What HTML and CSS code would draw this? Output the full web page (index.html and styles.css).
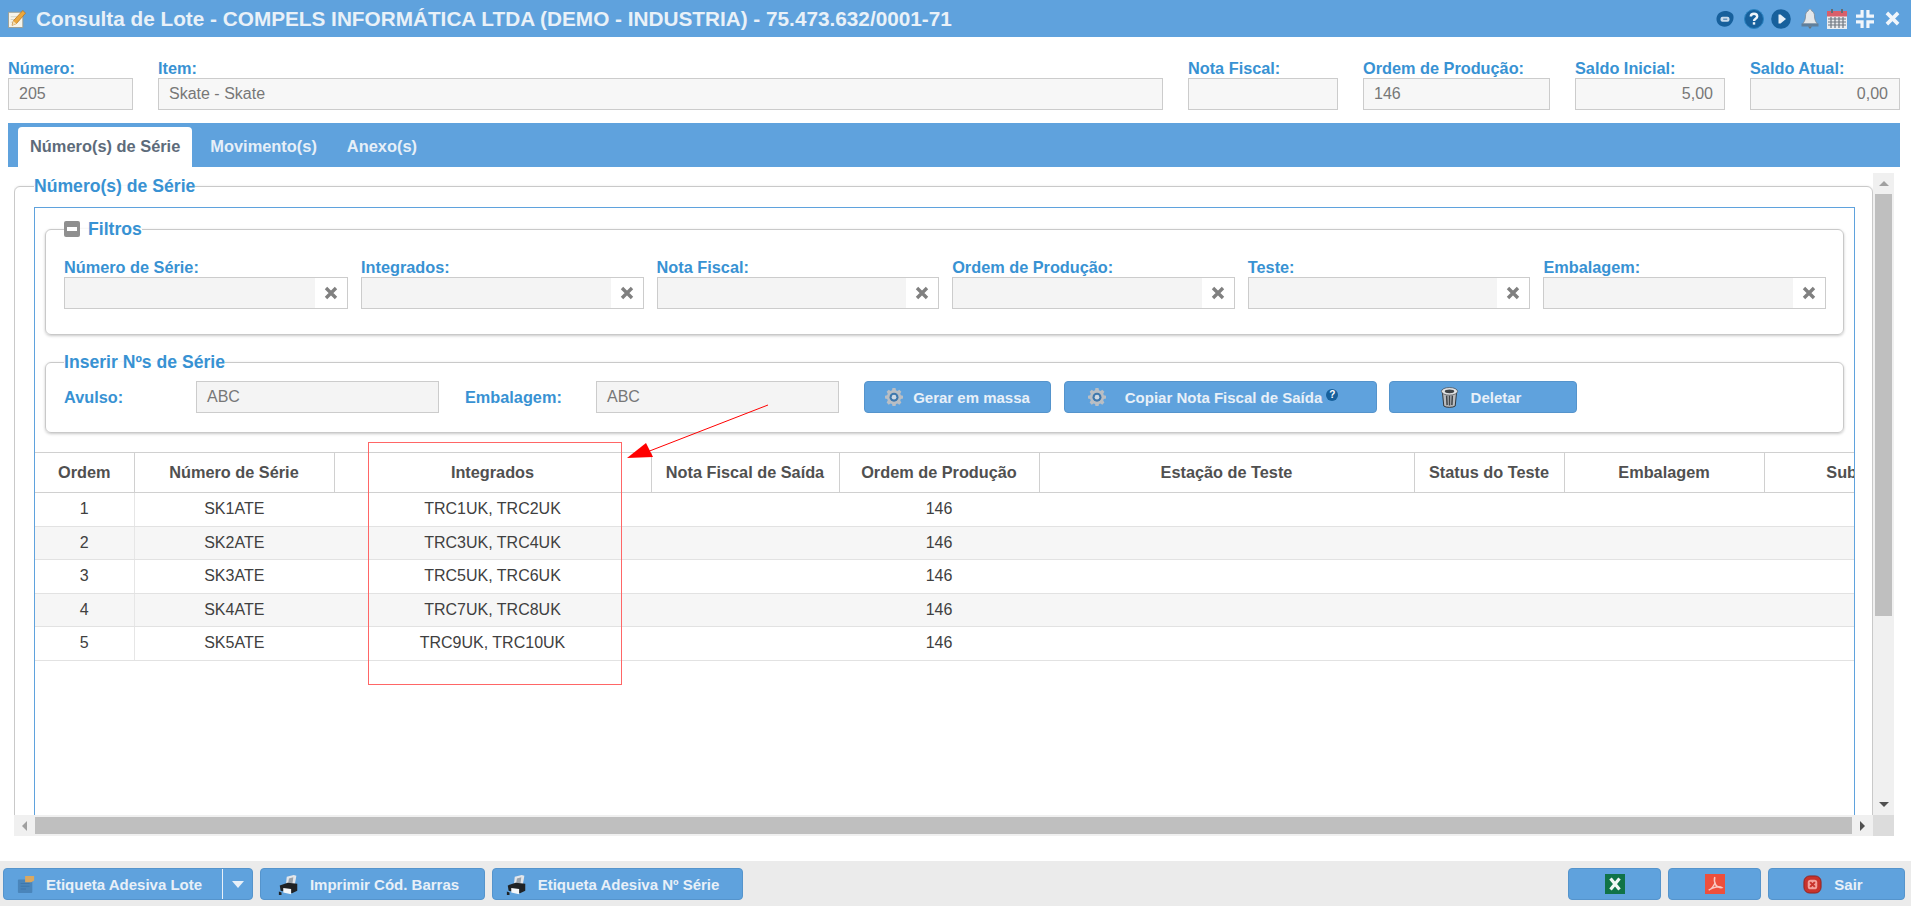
FILE: index.html
```html
<!DOCTYPE html>
<html lang="pt-BR">
<head>
<meta charset="utf-8">
<title>Consulta de Lote</title>
<link rel="stylesheet" href="styles.css">
</head>
<body>
<svg class="defs" width="0" height="0" aria-hidden="true">
  <defs>
    <symbol id="gear" viewBox="0 0 20 20">
      <path fill="#b9bec4" d="M8.300 0h3.400l.5 2.600 1.600.7 2.100-1.400 2.300 2.400-1.300 2.100.7 1.700 2.400.5v3.200l-2.400.5-.7 1.700 1.300 2.100-2.300 2.400-2.100-1.400-1.600.7-.5 2.100H8.300l-.5-2.100-1.600-.7-2.100 1.400-2.300-2.400 1.300-2.100-.7-1.700L0 11.800V8.600l2.400-.5.7-1.700-1.300-2.100 2.300-2.400 2.100 1.400 1.600-.7z"/>
      <circle cx="10" cy="10.200" r="5" fill="#3f78ad"/>
      <circle cx="10" cy="10.200" r="2.600" fill="#cfd9e4"/>
    </symbol>
    <symbol id="printer" viewBox="0 0 24 24">
      <path fill="#e3e6ea" d="M10 3l8-2 3 1-2 11H9z"/>
      <path fill="#9aa2aa" d="M12.500 5l5-1.200-1 7-5 .3z"/>
      <path fill="#1f2225" d="M2 13l9-3 11 1v8l-6 3-13-3z"/>
      <path fill="#f4f6f8" d="M6 16l9 1.200V23l-9-2z"/>
      <path fill="#1f2225" d="M1 20l3 1v3H1z"/>
    </symbol>
  </defs>
</svg>

<header class="titlebar">
  <div class="title">
    <svg class="title-icon" viewBox="0 0 20 20" aria-hidden="true">
      <path fill="#f6f4ea" stroke="#9a9a8c" d="M.5 2.500h16v17H.5z"/>
      <path fill="#d4d2c4" d="M3 7h7v1H3zM3 10h5v1H3zM3 13h4v1H3z"/>
      <path fill="#eca83c" stroke="#b5721f" stroke-width=".8" d="M16.500 .5l3 3-10 11.500-5 2 1.500-5z"/>
      <path fill="#f2dfb6" d="M6 12.200l3.300 3-4.500 1.700z"/>
    </svg>
    <h1>Consulta de Lote - COMPELS INFORMÁTICA LTDA (DEMO - INDUSTRIA) - 75.473.632/0001-71</h1>
  </div>
  <div class="title-tools">
    <svg class="tool t-chat" viewBox="0 0 20 20" aria-hidden="true"><path fill="#17609c" d="M10 1c5.500 0 9.500 2.500 9.500 7 0 6-4.500 10.500-10 10.500C4.500 18.500 .5 15 .5 10 .5 5 4.500 1 10 1z"/><rect x="5" y="7.500" width="10" height="5.500" rx="2.200" fill="#c9dbec"/><rect x="8" y="9.500" width="4.500" height="1.500" fill="#5d8fbb"/></svg>
    <svg class="tool t-help" viewBox="0 0 20 20" aria-hidden="true"><circle cx="10" cy="10" r="9.500" fill="#17609c" stroke="#2b84c2"/><path fill="none" stroke="#eef5fb" stroke-width="2.400" d="M6.800 7.600C6.800 5.700 8.200 4.800 10 4.800s3.200 1 3.200 2.700c0 2.300-3.200 2.300-3.200 4.600"/><rect x="8.800" y="13.200" width="2.400" height="2.400" fill="#eef5fb"/></svg>
    <svg class="tool t-play" viewBox="0 0 20 20" aria-hidden="true"><circle cx="10" cy="10" r="9.800" fill="#17609c"/><path fill="#e5eff8" d="M7.500 5.500h2L15 10l-5.500 4.500h-2z"/></svg>
    <svg class="tool t-bell" viewBox="0 0 20 20" aria-hidden="true"><path fill="#e3e7ea" stroke="#7d8892" stroke-width=".8" d="M10 0c1 0 1.600.8 1.600 1.800 2 .8 2.900 2.800 2.900 5.200 0 3 .8 5.500 3 8H2.500c2.200-2.500 3-5 3-8 0-2.400.9-4.400 2.900-5.200C8.400.8 9 0 10 0z"/><path fill="#5f7f9c" d="M1.500 14.500h17V17.500h-17z"/><path fill="#6a7279" d="M8 17.500h4L10 20z"/></svg>
    <svg class="tool t-cal" viewBox="0 0 20 20" aria-hidden="true"><rect x="0" y="2" width="20" height="18" fill="#e9ecef"/><rect x="0" y="2" width="20" height="5.500" fill="#d9606b"/><path fill="#646c75" d="M4 0h2v4H4zM14 0h2v4h-2z"/><path fill="none" stroke="#6e7781" stroke-width="1.200" d="M1 10h18M1 13h18M1 16h18M4 8v11M8 8v11M12 8v11M16 8v11"/></svg>
    <svg class="tool t-shrink" viewBox="0 0 20 20" aria-hidden="true"><path fill="#f1f6fb" d="M5 0h3.500v8.500H0V5h5zM11.500 0H15v5h5v3.500h-8.500zM0 11.500h8.500V20H5v-5H0zM11.500 11.500H20V15h-5v5h-3.500z"/></svg>
    <svg class="tool t-close" viewBox="0 0 16 16" aria-hidden="true"><path stroke="#f1f6fb" stroke-width="3.800" d="M2 2l12 12M14 2L2 14"/></svg>
  </div>
</header>

<section class="fields">
  <label class="field"><span class="lbl">Número:</span><span class="inp">205</span></label>
  <label class="field"><span class="lbl">Item:</span><span class="inp">Skate - Skate</span></label>
  <label class="field"><span class="lbl">Nota Fiscal:</span><span class="inp"></span></label>
  <label class="field"><span class="lbl">Ordem de Produção:</span><span class="inp">146</span></label>
  <label class="field"><span class="lbl">Saldo Inicial:</span><span class="inp num">5,00</span></label>
  <label class="field"><span class="lbl">Saldo Atual:</span><span class="inp num">0,00</span></label>
</section>

<nav class="tabs">
  <a class="tab active">Número(s) de Série</a>
  <a class="tab">Movimento(s)</a>
  <a class="tab">Anexo(s)</a>
</nav>

<main class="scroller">
  <div class="viewport">
    <fieldset class="fs outer">
      <legend class="leg">Número(s) de Série</legend>
      <div class="blue">
        <fieldset class="fs filt">
          <legend class="leg leg-icon"><span class="minus"></span>Filtros</legend>
          <div class="filter-grid">
            <div class="f"><span class="lbl">Número de Série:</span><div class="clr"><span class="clr-in"></span><span class="clr-x"><svg viewBox="0 0 14 14" aria-hidden="true"><path stroke="#808080" stroke-width="3.400" d="M2 2l10 10M12 2L2 12"/></svg></span></div></div>
            <div class="f"><span class="lbl">Integrados:</span><div class="clr"><span class="clr-in"></span><span class="clr-x"><svg viewBox="0 0 14 14" aria-hidden="true"><path stroke="#808080" stroke-width="3.400" d="M2 2l10 10M12 2L2 12"/></svg></span></div></div>
            <div class="f"><span class="lbl">Nota Fiscal:</span><div class="clr"><span class="clr-in"></span><span class="clr-x"><svg viewBox="0 0 14 14" aria-hidden="true"><path stroke="#808080" stroke-width="3.400" d="M2 2l10 10M12 2L2 12"/></svg></span></div></div>
            <div class="f"><span class="lbl">Ordem de Produção:</span><div class="clr"><span class="clr-in"></span><span class="clr-x"><svg viewBox="0 0 14 14" aria-hidden="true"><path stroke="#808080" stroke-width="3.400" d="M2 2l10 10M12 2L2 12"/></svg></span></div></div>
            <div class="f"><span class="lbl">Teste:</span><div class="clr"><span class="clr-in"></span><span class="clr-x"><svg viewBox="0 0 14 14" aria-hidden="true"><path stroke="#808080" stroke-width="3.400" d="M2 2l10 10M12 2L2 12"/></svg></span></div></div>
            <div class="f"><span class="lbl">Embalagem:</span><div class="clr"><span class="clr-in"></span><span class="clr-x"><svg viewBox="0 0 14 14" aria-hidden="true"><path stroke="#808080" stroke-width="3.400" d="M2 2l10 10M12 2L2 12"/></svg></span></div></div>
          </div>
        </fieldset>
        <fieldset class="fs ins">
          <legend class="leg">Inserir Nºs de Série</legend>
          <div class="ins-row">
            <span class="lbl ins-l1">Avulso:</span>
            <span class="inp in-a">ABC</span>
            <span class="lbl ins-l2">Embalagem:</span>
            <span class="inp in-a">ABC</span>
            <a class="btn b-gerar"><svg class="ic"><use href="#gear"/></svg>Gerar em massa</a>
            <a class="btn b-copiar"><svg class="ic ic-wide"><use href="#gear"/></svg>Copiar Nota Fiscal de Saída<span class="q">?</span></a>
            <a class="btn b-del"><svg class="ic-del" viewBox="0 0 20 22" aria-hidden="true"><path fill="#b9bcc0" stroke="#2e3134" d="M2.500 5l1.500 15c2 1.800 10 1.800 12 0l1.500-15z"/><path stroke="#3f4347" stroke-width="1.600" d="M7 9l.5 10M10 9v10.500M13 9l-.5 10"/><ellipse cx="10" cy="4.500" rx="8.500" ry="4" fill="#e0e2e4" stroke="#3f4347" stroke-width=".7"/><ellipse cx="10" cy="4.500" rx="5" ry="2" fill="#3f4347"/></svg>Deletar</a>
          </div>
        </fieldset>
        <div class="table-wrap">
          <table class="grid">
            <colgroup><col class="c1"><col class="c2"><col class="c3"><col class="c4"><col class="c5"><col class="c6"><col class="c7"><col class="c8"><col class="c9"></colgroup>
            <thead><tr><th>Ordem</th><th>Número de Série</th><th>Integrados</th><th>Nota Fiscal de Saída</th><th>Ordem de Produção</th><th>Estação de Teste</th><th>Status do Teste</th><th>Embalagem</th><th>Subgrupo</th></tr></thead>
            <tbody>
              <tr><td>1</td><td>SK1ATE</td><td>TRC1UK, TRC2UK</td><td></td><td>146</td><td></td><td></td><td></td><td></td></tr>
              <tr><td>2</td><td>SK2ATE</td><td>TRC3UK, TRC4UK</td><td></td><td>146</td><td></td><td></td><td></td><td></td></tr>
              <tr><td>3</td><td>SK3ATE</td><td>TRC5UK, TRC6UK</td><td></td><td>146</td><td></td><td></td><td></td><td></td></tr>
              <tr><td>4</td><td>SK4ATE</td><td>TRC7UK, TRC8UK</td><td></td><td>146</td><td></td><td></td><td></td><td></td></tr>
              <tr><td>5</td><td>SK5ATE</td><td>TRC9UK, TRC10UK</td><td></td><td>146</td><td></td><td></td><td></td><td></td></tr>
            </tbody>
          </table>
        </div>
      </div>
    </fieldset>
  </div>
  <div class="vbar">
    <span class="arr-up"></span>
    <span class="vtrack"><span class="vthumb"></span></span>
    <span class="arr-down"></span>
  </div>
  <div class="hbar">
    <span class="arr-left"></span>
    <span class="hthumb"></span>
    <span class="arr-right"></span>
  </div>
  <div class="corner"></div>
</main>

<footer class="footer">
  <div class="foot-l">
    <div class="btn split">
      <span class="split-main">
        <svg class="ic-doc" viewBox="0 0 20 20" aria-hidden="true"><rect x="1" y="5" width="16" height="15" rx="1" fill="#4a85ba"/><path fill="#3e77ab" d="M4 9h10v1H4zM4 12h10v1H4zM4 15h6v1H4z"/><path fill="#d9a862" d="M9 1h10v5l-3 2H9z"/></svg>
        Etiqueta Adesiva Lote
      </span>
      <span class="split-caret"><span class="caret"></span></span>
    </div>
    <a class="btn b-print1"><svg class="ic-print"><use href="#printer"/></svg>Imprimir Cód. Barras</a>
    <a class="btn b-print2"><svg class="ic-print"><use href="#printer"/></svg>Etiqueta Adesiva Nº Série</a>
  </div>
  <div class="foot-r">
    <a class="btn b-sq"><svg class="ic-sq" viewBox="0 0 20 20" aria-hidden="true"><rect width="20" height="20" fill="#107347"/><path stroke="#f3f7f4" stroke-width="3.200" d="M5.500 4.500l9 11M14.500 4.500l-9 11"/></svg></a>
    <a class="btn b-sq"><svg class="ic-sq" viewBox="0 0 20 20" aria-hidden="true"><rect width="20" height="20" fill="#ee4f3c"/><path fill="none" stroke="#f9c9c2" stroke-width="1.500" d="M9.800 3c-1 3 .5 7 1 8 1 1.500 4 3 6 2.600-2-1.600-8-1-13 2.400 2-.6 4.500-3.600 6-6.500"/></svg></a>
    <a class="btn b-sair"><svg class="ic-sair" viewBox="0 0 20 20" aria-hidden="true"><rect x="1" y="1" width="18" height="18" rx="6" fill="#c8332c" stroke="#8f2320"/><rect x="5" y="5" width="10" height="10" rx="3" fill="#f3a09a"/><path stroke="#c8332c" stroke-width="2.200" d="M7.500 7.500l5 5M12.500 7.500l-5 5"/></svg>Sair</a>
  </div>
</footer>

<div class="mark-box"></div>
<svg class="mark-arrow" viewBox="0 0 160 64" aria-hidden="true">
  <path stroke="#f00" stroke-width="1" fill="none" d="M141 7L20 54"/>
  <path fill="#f00" d="M0 60l19-15 7 14z"/>
</svg>
</body>
</html>
```

FILE: styles.css
```css
* { box-sizing: border-box; }
html, body { margin: 0; padding: 0; }
body {
  width: 1911px;
  height: 906px;
  overflow: hidden;
  position: relative;
  background: #fff;
  font-family: "Liberation Sans", Arial, sans-serif;
  font-size: 16px;
  color: #404040;
  display: flex;
  flex-direction: column;
}
.defs { position: absolute; }

.titlebar {
  height: 37px;
  flex: none;
  background: #5fa2dd;
  display: flex;
  align-items: center;
  justify-content: space-between;
  padding: 0 11px 0 8px;
}
.title { display: flex; align-items: center; gap: 10px; }
.title-icon { width: 18px; height: 18px; }
.title h1 { margin: 0; font-size: 20.75px; font-weight: 700; color: #e9f1f8; white-space: nowrap; }
.title-tools { display: flex; align-items: center; }
.tool { width: 20px; height: 20px; display: block; margin-left: 8px; }
.t-chat { width: 18px; height: 18px; }
.t-help { margin-left: 10px; }
.t-play { margin-left: 7px; }
.t-bell { width: 20px; margin-left: 9px; }
.t-cal { margin-left: 7px; }
.t-shrink { width: 18px; height: 18px; margin-left: 9px; }
.t-close { width: 15px; height: 15px; margin-left: 11px; }

.fields {
  flex: none;
  display: grid;
  grid-template-columns: 125px 1005px 150px 187px 150px 150px;
  column-gap: 25px;
  padding: 21px 0 0 8px;
}
.field { display: flex; flex-direction: column; gap: 0; }
.lbl { font-size: 16.3px; font-weight: 700; color: #3892d3; line-height: 20px; white-space: nowrap; }
.inp {
  display: block;
  height: 32px;
  border: 1px solid #ccc;
  background: #f7f7f7;
  color: #777;
  font-size: 16px;
  line-height: 30px;
  padding: 0 10px;
}
.inp.num { text-align: right; padding-right: 11px; }

.tabs {
  flex: none;
  height: 44px;
  margin: 13px 11px 0 8px;
  padding: 4px 0 0 10px;
  background: #5fa2dd;
  display: flex;
  align-items: stretch;
}
.tab {
  display: block;
  font-size: 16.4px;
  font-weight: 700;
  line-height: 38px;
  padding: 0 12px;
  margin-right: 6px;
  color: #e6eff8;
  border-radius: 4px 4px 0 0;
}
.tab.active { background: #fff; color: #5d6b7a; }

.scroller {
  flex: none;
  margin: 6px 0 0 14px;
  width: 1880px;
  height: 663px;
  display: grid;
  grid-template-columns: 1859px 21px;
  grid-template-rows: 642px 21px;
}
.viewport { overflow: hidden; padding-top: 3px; }
.fs { margin: 0; min-width: 0; border: 1px solid #c9c9c9; border-radius: 6px; box-shadow: 0 1px 3px rgba(0,0,0,.22); }
.leg { padding: 0; font-size: 17.6px; font-weight: 700; color: #3892d3; line-height: 20px; }
.outer { padding: 11px 17px 0 19px; height: 800px; }
.blue { border: 1px solid #5fa2dd; height: 760px; }
.filt { margin: 11px 10px 0 10px; height: 116px; padding: 18px 17px 0 18px; }
.filt > .leg { display: flex; align-items: center; }
.minus { width: 16px; height: 16px; border-radius: 2px; background: #8f8f8f; margin-right: 8px; display: block; }
.minus::after { content: ""; display: block; width: 10px; height: 4px; background: #fff; margin: 6px 3px; }
.filter-grid { display: grid; grid-template-columns: 284px repeat(5, 1fr); column-gap: 13px; }
.f .lbl { display: block; }
.clr { height: 32px; border: 1px solid #ccc; display: flex; background: #fff; }
.clr-in { flex: 1; background: #f4f4f4; }
.clr-x { width: 32px; display: flex; align-items: center; justify-content: center; }
.clr-x svg { width: 14px; height: 14px; }
.ins { margin: 17px 10px 0 10px; height: 81px; padding: 9px 17px 0 18px; }
.ins-row { display: flex; align-items: center; }
.ins-row .lbl { display: block; }
.ins-l1 { width: 132px; }
.ins-l2 { margin-left: 26px; width: 131px; }
.in-a { width: 243px; background: #f4f4f4; }
.btn {
  display: flex;
  align-items: center;
  justify-content: center;
  height: 32px;
  background: #5fa2dd;
  border: 1px solid #5594cc;
  border-radius: 4px;
  color: #e8f0f8;
  font-size: 15px;
  font-weight: 700;
  white-space: nowrap;
}
.ic { width: 18px; height: 18px; margin-right: 10px; flex: none; }
.ic-wide { margin-right: 19px; }
.b-gerar { width: 187px; margin-left: 25px; }
.b-copiar { width: 313px; margin-left: 13px; padding-right: 15px; }
.b-del { width: 188px; margin-left: 12px; padding-right: 5px; }
.ic-del { width: 19px; height: 21px; margin-right: 12px; }
.q { display: block; width: 12px; height: 12px; border-radius: 50%; background: #17609c; color: #fff; font-size: 10px; line-height: 12px; text-align: center; margin: -4px 0 0 4px; }

.table-wrap { margin-top: 19px; overflow: hidden; height: 400px; }
.grid { border-collapse: collapse; table-layout: fixed; width: 1930px; font-size: 16px; }
.c1 { width: 99px; } .c2 { width: 200px; } .c3 { width: 317px; } .c4 { width: 188px; }
.c5 { width: 200px; } .c6 { width: 375px; } .c7 { width: 150px; } .c8 { width: 200px; } .c9 { width: 201px; }
.grid th {
  height: 40px;
  font-size: 16.3px;
  font-weight: 700;
  color: #505050;
  border-top: 1px solid #d0d0d0;
  border-bottom: 1px solid #d0d0d0;
  border-left: 1px solid #d0d0d0;
  text-align: center;
  padding: 0;
  white-space: nowrap;
}
.grid th:first-child { border-left: 0; }
.grid td {
  height: 33.5px;
  text-align: center;
  padding: 0;
  color: #404040;
  border-bottom: 1px solid #e2e2e2;
}
.grid td:nth-child(2) { border-left: 1px solid #e6e6e6; }
.grid tbody tr:nth-child(even) td { background: #f6f6f6; }

.vbar { background: #fff; padding-left: 2px; padding-right: 2px; display: flex; flex-direction: column; }
.vtrack { flex: 1; background: #f0f0f0; display: block; margin: 0 -2px; padding: 0 2px; }
.vthumb { display: block; width: 17px; height: 422px; background: #bfbfbf; }
.arr-up, .arr-down { display: flex; height: 21px; background: #f0f0f0; margin: 0 -2px; align-items: center; justify-content: center; }
.arr-up::before { content: ""; border: 5px solid transparent; border-top: 0; border-bottom: 5px solid #a0a0a0; }
.arr-down::before { content: ""; border: 5px solid transparent; border-bottom: 0; border-top: 5px solid #505050; }
.hbar { background: #f0f0f0; display: flex; align-items: center; }
.arr-left, .arr-right { width: 21px; display: flex; align-items: center; justify-content: center; flex: none; }
.arr-left::before { content: ""; border: 5px solid transparent; border-left: 0; border-right: 5px solid #a0a0a0; }
.arr-right::before { content: ""; border: 5px solid transparent; border-right: 0; border-left: 5px solid #505050; }
.hthumb { height: 17px; flex: 1; background: #bfbfbf; }
.corner { background: #dcdcdc; }

.footer {
  flex: none;
  margin-top: 25px;
  height: 45px;
  background: #ebebeb;
  display: flex;
  justify-content: space-between;
  padding: 7px 6px 0 3px;
}
.foot-l, .foot-r { display: flex; gap: 7px; }
.split { width: 250px; justify-content: flex-start; }
.split-main { width: 218px; display: flex; align-items: center; justify-content: center; padding-right: 7px; }
.split-caret { flex: 1; height: 100%; border-left: 1px solid #e8f0f8; display: flex; align-items: center; justify-content: center; }
.caret { border: 6px solid transparent; border-bottom: 0; border-top: 7px solid #e8f0f8; }
.ic-doc { width: 18px; height: 18px; margin-right: 11px; }
.b-print1 { width: 225px; padding-right: 8px; }
.b-print2 { width: 251px; padding-right: 10px; }
.ic-print { width: 21px; height: 21px; margin-right: 11px; }
.b-sq { width: 93px; }
.ic-sq { width: 20px; height: 20px; }
.b-sair { width: 137px; padding-right: 7px; }
.ic-sair { width: 19px; height: 19px; margin-right: 12px; }

.mark-box { position: absolute; left: 368px; top: 442px; width: 254px; height: 243px; border: 1px solid #f66; }
.mark-arrow { position: absolute; left: 627px; top: 398px; width: 160px; height: 64px; }
```
